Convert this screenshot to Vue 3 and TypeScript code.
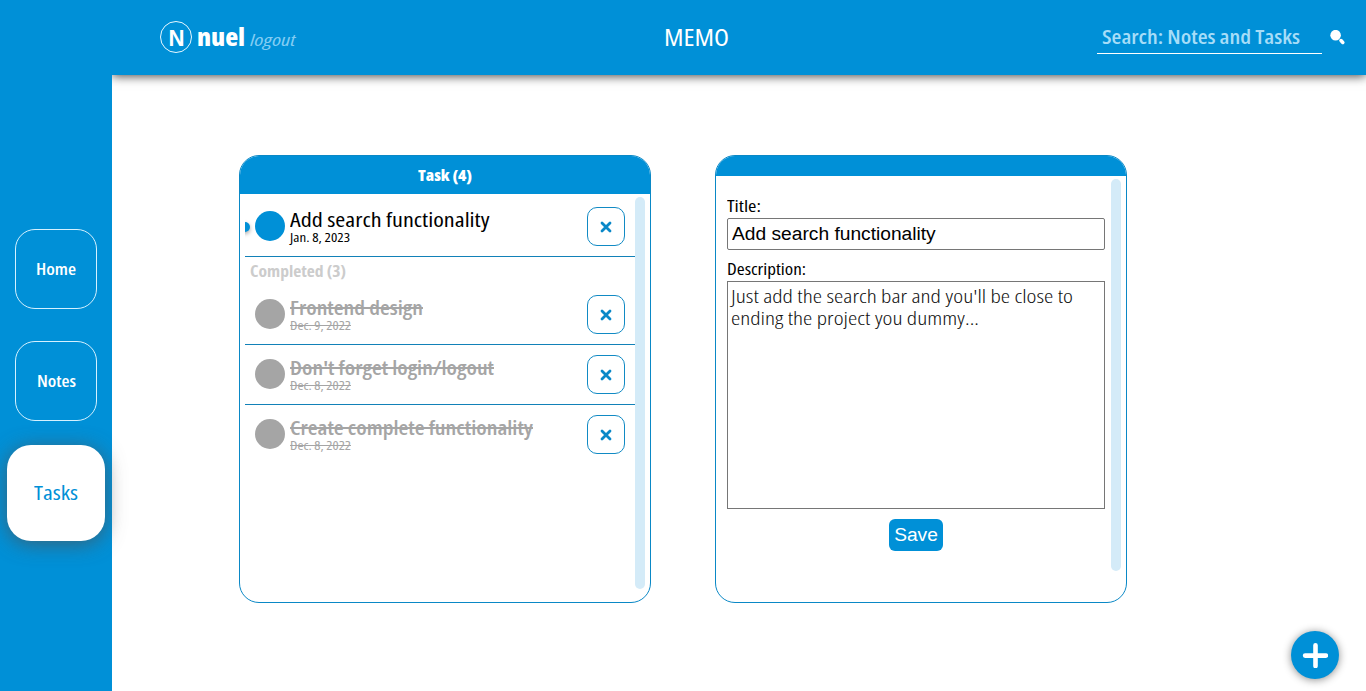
<script setup lang="ts">
import { ref } from 'vue'
import type { Directive } from 'vue'

interface Task {
  title: string
  width: number
  date: string
  dateWidth: number
}

// Condenses a label horizontally so that it takes exactly the given width.
const vFit: Directive<HTMLElement, number> = {
  mounted(el, binding) {
    const natural = el.getBoundingClientRect().width
    el.style.transform = `scaleX(${binding.value / natural})`
    el.style.marginRight = `${binding.value - natural}px`
  },
}

const open = ref<Task[]>([
  { title: 'Add search functionality', width: 199.5, date: 'Jan. 8, 2023', dateWidth: 60 },
])
const completed = ref<Task[]>([
  { title: 'Frontend design', width: 133, date: 'Dec. 9, 2022', dateWidth: 61 },
  { title: "Don't forget login/logout", width: 204, date: 'Dec. 8, 2022', dateWidth: 61 },
  { title: 'Create complete functionality', width: 243, date: 'Dec. 8, 2022', dateWidth: 61 },
])
const title = ref('Add search functionality')
</script>

<template>
  <div class="app">
    <nav class="side">
      <button class="nav"><span v-fit="40" class="fit">Home</span></button>
      <button class="nav"><span v-fit="39" class="fit">Notes</span></button>
      <button class="nav active"><span v-fit="44" class="fit">Tasks</span></button>
    </nav>
    <header class="top">
      <div class="user">
        <span class="avatar"><span v-fit="17" class="fit">N</span></span>
        <span v-fit="48" class="fit name">nuel</span>
        <span v-fit="45.5" class="fit logout">logout</span>
      </div>
      <h1 class="brand"><span v-fit="65" class="fit">MEMO</span></h1>
      <div class="search">
        <div class="field"><span v-fit="198" class="fit">Search: Notes and Tasks</span></div>
        <svg class="glass" width="16" height="16" viewBox="0 0 16 16">
          <circle cx="5.6" cy="5.2" r="5.3" fill="#fff" />
          <path d="M11 10.6L12.8 12.4" stroke="#fff" stroke-width="3.6" stroke-linecap="round" />
        </svg>
      </div>
    </header>
    <main class="board">
      <section class="card">
        <h2 class="cap"><span v-fit="54" class="fit">Task (4)</span></h2>
        <div class="body">
          <div class="list">
            <article v-for="t in open" :key="t.title" class="row lined">
              <i class="marker"></i>
              <i class="dot"></i>
              <div class="info">
                <div class="title"><span v-fit="t.width" class="fit">{{ t.title }}</span></div>
                <div class="date"><span v-fit="t.dateWidth" class="fit">{{ t.date }}</span></div>
              </div>
              <button class="del">
                <svg width="12" height="12" viewBox="0 0 12 12"><path d="M2 2L10 10M10 2L2 10" /></svg>
              </button>
            </article>
            <h3 class="group"><span v-fit="96" class="fit">Completed (3)</span></h3>
            <article
              v-for="(t, i) in completed"
              :key="t.title"
              class="row done"
              :class="{ lined: i < completed.length - 1 }"
            >
              <i class="dot"></i>
              <div class="info">
                <div class="title"><span v-fit="t.width" class="fit">{{ t.title }}</span></div>
                <div class="date"><span v-fit="t.dateWidth" class="fit">{{ t.date }}</span></div>
              </div>
              <button class="del">
                <svg width="12" height="12" viewBox="0 0 12 12"><path d="M2 2L10 10M10 2L2 10" /></svg>
              </button>
            </article>
          </div>
          <div class="bar"></div>
        </div>
      </section>
      <section class="card">
        <div class="cap slim"></div>
        <div class="body">
          <form class="form" @submit.prevent>
            <label class="label"><span v-fit="34" class="fit">Title:</span></label>
            <input v-model="title" class="input" />
            <label class="label second"><span v-fit="79" class="fit">Description:</span></label>
            <div class="area" role="textbox">
              <div><span v-fit="342" class="fit">Just add the search bar and you'll be close to</span></div>
              <div><span v-fit="248" class="fit">ending the project you dummy...</span></div>
            </div>
            <button class="save">Save</button>
          </form>
          <div class="bar"></div>
        </div>
      </section>
    </main>
    <button class="fab">
      <svg width="26" height="26" viewBox="0 0 26 26">
        <path d="M13.5 3.2V24M3.1 13.6H23.9" stroke="#fff" stroke-width="4.6" stroke-linecap="round" />
      </svg>
    </button>
  </div>
</template>

<style>
html,
body {
  margin: 0;
  overflow: hidden;
  background: #fff;
}
</style>

<style scoped>
.app {
  display: grid;
  grid-template: 75px 1fr / 112px 1fr;
  width: 1366px;
  height: 691px;
  position: relative;
  overflow: hidden;
  font-family: 'Open Sans', 'Noto Sans', sans-serif;
  font-stretch: 80%;
}
.app * {
  box-sizing: border-box;
}
button {
  font: inherit;
  padding: 0;
  cursor: pointer;
}
h1,
h2,
h3 {
  margin: 0;
}
.fit {
  display: inline-block;
  white-space: nowrap;
  transform-origin: 0 50%;
}
.side {
  grid-row: 1 / 3;
  background: #0090d7;
  z-index: 2;
  display: flex;
  flex-direction: column;
  align-items: center;
  padding-top: 229px;
}
.nav {
  width: 82px;
  height: 80px;
  flex: none;
  margin-bottom: 32px;
  border: 1px solid #d5f1ff;
  border-radius: 20px;
  background: none;
  color: #fff;
  font-size: 16px;
  font-weight: 550;
}
.nav.active {
  width: 98px;
  height: 96px;
  margin-top: -8px;
  border: 0;
  border-radius: 24px;
  background: #fff;
  color: #0090d7;
  font-size: 19px;
  font-weight: 500;
  box-shadow: 0 3px 20px rgba(80, 80, 80, 0.7);
}
.top {
  background: #0090d7;
  box-shadow: 0 1px 10px rgba(0, 0, 0, 0.75);
  display: grid;
  grid-template-columns: 504px 1fr 269px;
  align-items: start;
  padding-left: 48px;
  color: #fff;
  z-index: 1;
}
.user {
  display: flex;
  align-items: flex-start;
  padding-top: 21px;
}
.avatar {
  width: 32px;
  height: 32px;
  border: 1px solid #e8f8ff;
  border-radius: 50%;
  display: flex;
  justify-content: center;
  font-size: 22px;
  font-weight: 550;
  line-height: 30px;
}
.name {
  margin-left: 5px;
  font-size: 24px;
  font-weight: 800;
  line-height: 32px;
}
.logout {
  margin-left: 5px;
  font-size: 16px;
  font-style: italic;
  line-height: 39px;
  color: #83cdf3;
}
.brand {
  font-size: 23px;
  font-weight: 500;
  line-height: 32px;
  padding-top: 21px;
  margin-left: -0.5px;
}
.search {
  display: flex;
}
.field {
  width: 225px;
  height: 54px;
  padding: 21px 0 0 5px;
  border-bottom: 1px solid #fff;
  color: #a6ddf8;
  font-size: 20px;
  font-weight: 550;
  line-height: 31px;
}
.glass {
  margin: 30px 0 0 8px;
}
.board {
  display: flex;
  gap: 64px;
  padding: 80px 0 0 127px;
}
.card {
  width: 412px;
  height: 448px;
  border: 1px solid #0a88c6;
  border-radius: 20px;
  overflow: hidden;
}
.cap {
  height: 38px;
  background: #0090d7;
  color: #fff;
  text-align: center;
  font-size: 16px;
  font-weight: 800;
  line-height: 38px;
}
.cap.slim {
  height: 20px;
}
.body {
  display: flex;
  padding: 3px 5px;
}
.bar {
  width: 10px;
  height: 392px;
  flex: none;
  border-radius: 5px;
  background: #d4ebf8;
}
.list {
  width: 390px;
  overflow: hidden;
}
.row {
  position: relative;
  display: flex;
  align-items: flex-start;
  height: 60px;
  padding: 0 10px;
}
.lined {
  border-bottom: 1px solid #1281b8;
}
.marker {
  position: absolute;
  left: -5px;
  top: 25px;
  width: 10px;
  height: 10px;
  border-radius: 50%;
  background: #0090d7;
  box-shadow: 0 2px 4px rgba(0, 0, 0, 0.35);
}
.dot {
  width: 30px;
  height: 30px;
  margin-top: 14px;
  border-radius: 50%;
  background: #0090d7;
}
.info {
  flex: 1;
  padding: 11px 0 0 5px;
}
.title {
  font-size: 20px;
  font-weight: 500;
  line-height: 23px;
}
.date {
  font-size: 12px;
  font-weight: 400;
  line-height: 13px;
}
.del {
  display: flex;
  align-items: center;
  justify-content: center;
  width: 38px;
  height: 39px;
  margin-top: 10px;
  border: 1px solid #118ac4;
  border-radius: 10px;
  background: #fff;
}
.del path {
  stroke: #0a88c8;
  stroke-width: 2.8;
  stroke-linecap: round;
}
.group {
  height: 28px;
  padding-left: 5px;
  color: #ccc;
  font-size: 16px;
  font-weight: 700;
  line-height: 28px;
}
.done .dot {
  background: #a5a5a5;
}
.done .info {
  color: #a5a5a5;
}
.done .title {
  font-weight: 600;
}
.done .fit {
  text-decoration: line-through;
}
.form {
  width: 390px;
  padding: 15px 6px 0 6px;
  display: flex;
  flex-direction: column;
}
.label {
  height: 24px;
  font-size: 16px;
  line-height: 24px;
}
.label.second {
  margin-top: 7px;
}
.input {
  width: 378px;
  height: 32px;
  padding: 0 4px;
  border: 1px solid #767676;
  border-radius: 2px;
  outline: 0;
  font: 19.2px 'Liberation Sans', Arial, sans-serif;
  color: #000;
}
.area {
  width: 378px;
  height: 228px;
  padding: 3px;
  border: 1px solid #767676;
  color: #111;
  font-size: 19px;
  font-weight: 300;
  line-height: 22px;
}
.save {
  align-self: center;
  width: 54px;
  height: 32px;
  margin-top: 10px;
  border: 0;
  border-radius: 6px;
  background: #0090d7;
  color: #fff;
  font: 19.2px 'Liberation Sans', Arial, sans-serif;
}
.fab {
  position: absolute;
  left: 1291px;
  top: 631px;
  width: 48px;
  height: 48px;
  border: 0;
  border-radius: 50%;
  background: #0090d7;
  display: flex;
  align-items: center;
  justify-content: center;
  box-shadow: 0 1px 9px rgba(0, 0, 0, 0.45);
}
</style>
